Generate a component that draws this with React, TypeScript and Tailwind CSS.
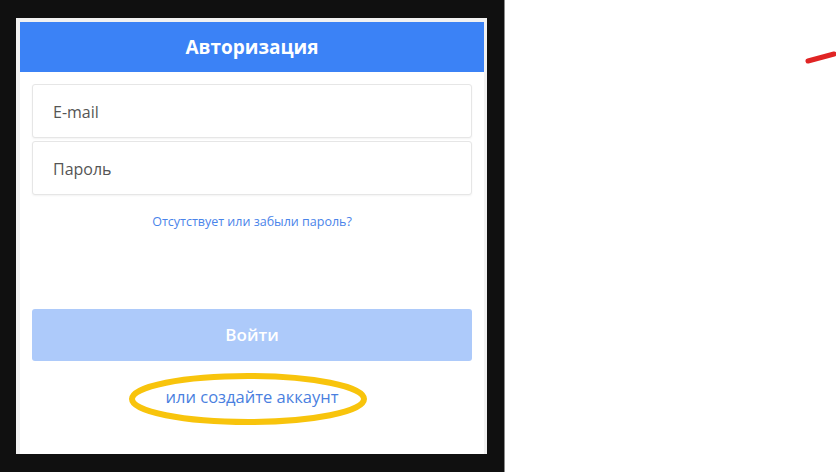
import React from "react";

const font = { fontFamily: '"Open Sans", "Noto Sans", sans-serif' };

const Field: React.FC<{ placeholder: string; type?: string }> = ({ placeholder, type = "text" }) => (
  <input
    type={type}
    placeholder={placeholder}
    className="h-[54px] w-full rounded-[3px] border border-[#e6e6e6] bg-white pl-[20px] pt-[2px] text-[16px] text-[#444] shadow-[0_1px_2px_rgba(0,0,0,0.05)] outline-none placeholder:text-[#555]"
  />
);

const App: React.FC = () => {
  return (
    <div className="relative flex h-[472px] w-[836px] overflow-hidden bg-white" style={font}>
      <div className="h-full w-[505px] border-r border-[#8a8a8a] bg-[#101010] pl-[16px] pt-[18px]">
        <div className="flex h-[436px] w-[471px] flex-col border-l-4 border-r-[3px] border-t-4 border-[#f1f1f1] bg-white">
          <div className="flex h-[50px] items-center justify-center bg-[#3b82f6]">
            <h1 className="text-[19px] font-bold text-white">Авторизация</h1>
          </div>

          <div className="flex flex-1 flex-col px-[12px] pt-[12px]">
            <div className="flex flex-col gap-[3px]">
              <Field placeholder="E-mail" />
              <Field placeholder="Пароль" type="password" />
            </div>

            <a className="mt-[18px] text-center text-[12.5px] text-[#4a84ea]" href="#">
              Отсутствует или забыли пароль?
            </a>

            <button
              disabled
              className="mt-[77px] h-[52px] w-full rounded-[3px] bg-[#adcafa] text-[17px] font-semibold text-white"
            >
              Войти
            </button>

            <div className="relative mt-[24px] flex justify-center">
              <a className="text-[16.5px] text-[#4a7fe0]" href="#">
                или создайте аккаунт
              </a>
              {/* yellow highlight drawn on top */}
              <svg
                className="pointer-events-none absolute left-[96px] top-[-13px]"
                width="242"
                height="54"
                viewBox="0 0 242 54"
              >
                <ellipse cx="120" cy="27" rx="116" ry="23" fill="none" stroke="#f8c40c" strokeWidth="6" />
              </svg>
            </div>
          </div>
        </div>
      </div>

      {/* red pen mark */}
      <svg className="pointer-events-none absolute left-[800px] top-[48px]" width="40" height="20" viewBox="0 0 40 20">
        <line x1="8" y1="13" x2="34" y2="6" stroke="#e02424" strokeWidth="5" strokeLinecap="round" />
      </svg>
    </div>
  );
};

export default App;
